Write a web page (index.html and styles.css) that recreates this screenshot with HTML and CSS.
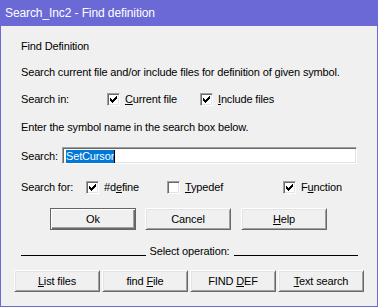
FILE: index.html
```html
<!DOCTYPE html>
<html lang="en">
<head>
    <meta charset="UTF-8">
    <title>Search_Inc2 - Find definition</title>
    <link rel="stylesheet" href="styles.css">
</head>
<body>
    <div class="window">
        <div class="titlebar">Search_Inc2 - Find definition</div>

        <div class="content">
            <div class="row row-heading">Find Definition</div>
            <div class="row row-desc">Search current file and/or include files for definition of given symbol.</div>

            <div class="row row-in">
                <span class="label label-in">Search in:</span>
                <label class="check check-current">
                    <span class="box"><svg width="7" height="7" viewBox="0 0 7 7"><path d="M6 0h1v1h-1zM5 1h2v1h-2zM0 2h1v1h-1zM4 2h3v1h-3zM0 3h2v1h-2zM3 3h3v1h-3zM0 4h5v1h-5zM1 5h3v1h-3zM2 6h1v1h-1z"/></svg></span>
                    <span><u>C</u>urrent file</span>
                </label>
                <label class="check">
                    <span class="box"><svg width="7" height="7" viewBox="0 0 7 7"><path d="M6 0h1v1h-1zM5 1h2v1h-2zM0 2h1v1h-1zM4 2h3v1h-3zM0 3h2v1h-2zM3 3h3v1h-3zM0 4h5v1h-5zM1 5h3v1h-3zM2 6h1v1h-1z"/></svg></span>
                    <span><u>I</u>nclude files</span>
                </label>
            </div>

            <div class="row row-enter">Enter the symbol name in the search box below.</div>

            <div class="row row-search">
                <span class="label label-search">Search:</span>
                <div class="input"><span class="selected">SetCursor</span><span class="caret"></span></div>
            </div>

            <div class="row row-for">
                <span class="label label-for">Search for:</span>
                <label class="check check-define">
                    <span class="box"><svg width="7" height="7" viewBox="0 0 7 7"><path d="M6 0h1v1h-1zM5 1h2v1h-2zM0 2h1v1h-1zM4 2h3v1h-3zM0 3h2v1h-2zM3 3h3v1h-3zM0 4h5v1h-5zM1 5h3v1h-3zM2 6h1v1h-1z"/></svg></span>
                    <span>#d<u>e</u>fine</span>
                </label>
                <label class="check check-typedef">
                    <span class="box"></span>
                    <span><u>T</u>ypedef</span>
                </label>
                <label class="check">
                    <span class="box"><svg width="7" height="7" viewBox="0 0 7 7"><path d="M6 0h1v1h-1zM5 1h2v1h-2zM0 2h1v1h-1zM4 2h3v1h-3zM0 3h2v1h-2zM3 3h3v1h-3zM0 4h5v1h-5zM1 5h3v1h-3zM2 6h1v1h-1z"/></svg></span>
                    <span>F<u>u</u>nction</span>
                </label>
            </div>

            <div class="row row-buttons">
                <button class="btn btn-default">Ok</button>
                <button class="btn">Cancel</button>
                <button class="btn"><u>H</u>elp</button>
            </div>

            <div class="row row-operation">
                <span class="rule"></span>
                <span class="operation-text">Select operation:</span>
                <span class="rule"></span>
            </div>

            <div class="row row-ops">
                <button class="btn"><u>L</u>ist files</button>
                <button class="btn">find <u>F</u>ile</button>
                <button class="btn">FIND <u>D</u>EF</button>
                <button class="btn"><u>T</u>ext search</button>
            </div>
        </div>
    </div>
</body>
</html>
```

FILE: styles.css
```css
html, body {
    margin: 0;
    padding: 0;
}

body {
    font-family: "Liberation Sans", Arial, sans-serif;
    font-size: 11px;
    letter-spacing: -0.15px;
    color: #000000;
    background: #f0f0f0;
}

.window {
    width: 378px;
    height: 307px;
    box-sizing: border-box;
    border: 1px solid #6b69d6;
    border-top: none;
    background: #f0f0f0;
}

.titlebar {
    height: 26px;
    margin: 0 -1px;
    padding-left: 5px;
    background: #6b69d6;
    color: #ffffff;
    font-size: 12px;
    letter-spacing: -0.1px;
    line-height: 26px;
}

.content {
    padding-top: 13px;
}

.row {
    display: flex;
    align-items: center;
    height: 14px;
    padding-left: 20px;
    white-space: nowrap;
}

.row-desc { margin-top: 12px; }
.row-in { margin-top: 13px; }
.row-enter { margin-top: 14px; }
.row-search { margin-top: 13px; height: 17px; }
.row-for { margin-top: 16px; }
.row-buttons { margin-top: 14px; height: 22px; padding-left: 49px; }
.row-operation { margin-top: 14px; padding-right: 19px; }
.row-ops { margin-top: 12px; height: 22px; padding-left: 13px; }

.label { flex: none; }
.label-in { width: 86px; }
.label-search { width: 41px; }
.label-for { width: 65px; }

/* checkboxes */
.check {
    display: flex;
    align-items: center;
    flex: none;
}
.check-current { width: 93px; }
.check-define { width: 81px; }
.check-typedef { width: 116px; }

.box {
    width: 13px;
    height: 13px;
    box-sizing: border-box;
    margin-right: 5px;
    background: #ffffff;
    border-top: 1px solid #a0a0a0;
    border-left: 1px solid #a0a0a0;
    border-right: 1px solid #ffffff;
    border-bottom: 1px solid #ffffff;
    box-shadow: inset 1px 1px 0 #696969, inset -1px -1px 0 #e3e3e3;
    display: flex;
    padding: 2px 0 0 2px;
}
.box svg {
    display: block;
    fill: #000000;
    shape-rendering: crispEdges;
}

/* text field */
.input {
    width: 295px;
    height: 17px;
    box-sizing: border-box;
    background: #ffffff;
    border-top: 1px solid #a0a0a0;
    border-left: 1px solid #a0a0a0;
    border-right: 1px solid #ffffff;
    border-bottom: 1px solid #ffffff;
    box-shadow: inset 1px 1px 0 #696969, inset -1px -1px 0 #e3e3e3;
    padding: 2px 0 0 3px;
    display: flex;
    align-items: flex-start;
}
.selected {
    background: #0078d7;
    color: #ffffff;
    line-height: 13px;
    height: 13px;
}
.caret {
    width: 1px;
    height: 13px;
    background: #000000;
}

/* buttons */
.btn {
    flex: none;
    width: 86px;
    height: 22px;
    box-sizing: border-box;
    margin: 0 2px 0 0;
    padding: 0;
    font: inherit;
    letter-spacing: inherit;
    color: #000000;
    background: #f0f0f0;
    border-top: 1px solid #ffffff;
    border-left: 1px solid #ffffff;
    border-right: 1px solid #696969;
    border-bottom: 1px solid #696969;
    box-shadow: inset 1px 1px 0 #e3e3e3, inset -1px -1px 0 #a0a0a0;
    border-radius: 0;
}
.row-buttons .btn { margin-right: 9px; }
.row-buttons .btn:last-child { margin-left: 1px; }

.btn-default {
    border: 1px solid #646464;
    box-shadow: inset 1px 1px 0 #ffffff, inset -1px -1px 0 #696969, inset -2px -2px 0 #a0a0a0;
}

/* separator */
.rule {
    flex: 1;
    height: 1px;
    background: #000000;
    align-self: flex-end;
    margin-bottom: 2px;
}
.operation-text {
    padding: 0 4px;
}
```
